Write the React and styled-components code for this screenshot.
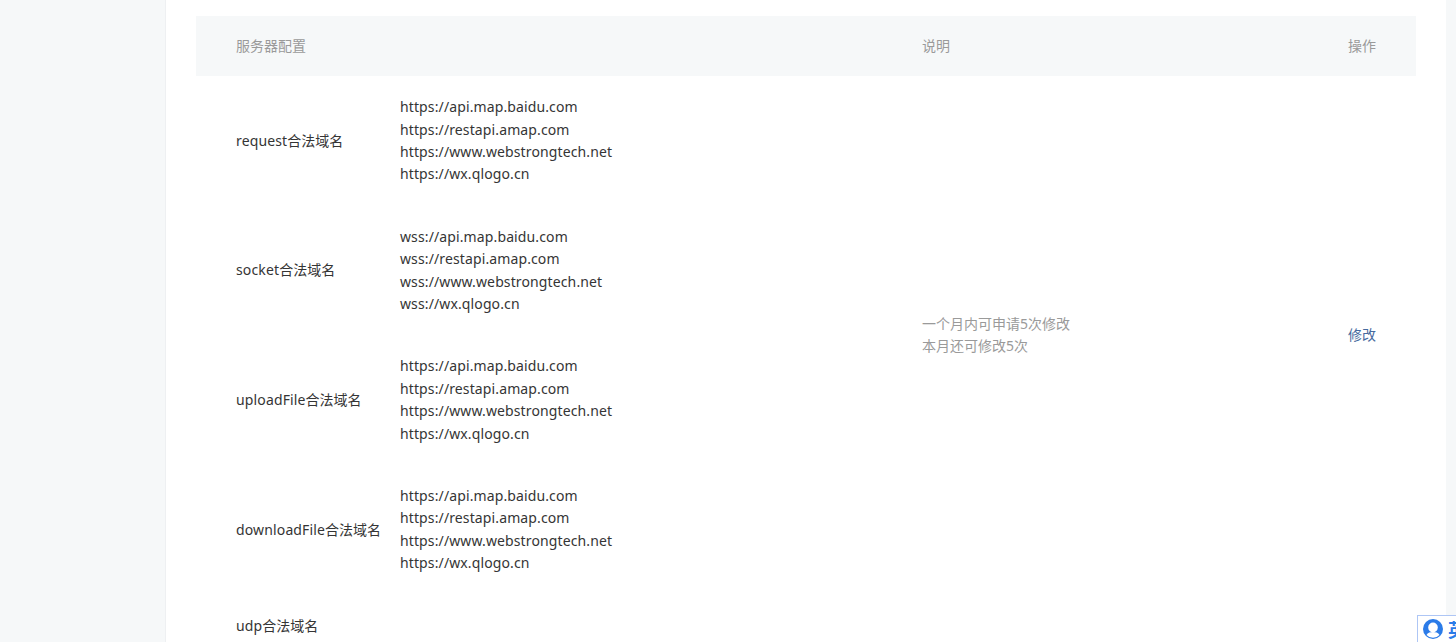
import React from 'react';
import styled, { createGlobalStyle } from 'styled-components';

const GlobalStyle = createGlobalStyle`
  html, body {
    margin: 0;
    height: 100%;
    overflow: hidden;
    background: #f6f8f9;
    font-family: "Noto Sans", "Noto Sans CJK SC", sans-serif;
  }
`;

const Page = styled.div`
  display: flex;
  height: 642px;
  overflow: hidden;
`;

const Sidebar = styled.aside`
  flex: 0 0 165px;
  background: #f6f8f9;
`;

const Main = styled.main`
  flex: 0 0 1281px;
  box-sizing: border-box;
  padding: 16px 30px 0;
  background: #fff;
  border-left: 1px solid #eef0f2;
`;

const Table = styled.div`
  display: grid;
  grid-template-columns: 204px 522px 1fr 109px;
  font-size: 14px;
  line-height: 22.4px;
  color: #353535;
`;

const HeadCell = styled.div`
  display: flex;
  align-items: center;
  justify-content: ${(p) => (p.$right ? 'flex-end' : 'flex-start')};
  height: 60.2px;
  padding: ${(p) => (p.$first ? '0 0 0 40px' : p.$right ? '0 40px 0 0' : '0')};
  background: #f6f8f9;
  color: #9a9a9a;
`;

const Label = styled.div`
  display: flex;
  align-items: center;
  padding: 20px 0 20px 40px;
  white-space: nowrap;
`;

const LabelName = styled.span`
  letter-spacing: 0.14px;
`;

const Domains = styled.div`
  padding: 20px 0;
`;

const Domain = styled.div`
  white-space: nowrap;
  letter-spacing: 0.12px;
`;

const Note = styled.div`
  grid-column: 3;
  grid-row: 2 / span 4;
  align-self: center;
  color: #9a9a9a;
`;

const Action = styled.a`
  grid-column: 4;
  grid-row: 2 / span 4;
  align-self: center;
  justify-self: end;
  padding-right: 40px;
  color: #466a9e;
  text-decoration: none;
`;

const LangBadge = styled.div`
  position: fixed;
  left: 1417px;
  top: 615px;
  display: flex;
  align-items: flex-start;
  gap: 5px;
  box-sizing: border-box;
  width: 60px;
  height: 40px;
  padding: 3px 0 0 5px;
  background: #fff;
  border: 1px solid #aec6f5;
  color: #2b7be8;
  font-size: 18px;
  line-height: 22px;
  font-weight: 700;
`;

const hosts = [
  'api.map.baidu.com',
  'restapi.amap.com',
  'www.webstrongtech.net',
  'wx.qlogo.cn',
];

const rows = [
  { name: 'request', scheme: 'https' },
  { name: 'socket', scheme: 'wss' },
  { name: 'uploadFile', scheme: 'https' },
  { name: 'downloadFile', scheme: 'https' },
];

const App = () => {
  return (
    <Page>
      <GlobalStyle />
      <Sidebar />
      <Main>
        <Table>
          <HeadCell $first>服务器配置</HeadCell>
          <HeadCell />
          <HeadCell>说明</HeadCell>
          <HeadCell $right>操作</HeadCell>
          {rows.map((row) => (
            <React.Fragment key={row.name}>
              <Label><LabelName>{row.name}</LabelName>合法域名</Label>
              <Domains>
                {hosts.map((host) => (
                  <Domain key={host}>{row.scheme}://{host}</Domain>
                ))}
              </Domains>
            </React.Fragment>
          ))}
          <Note>
            <div>一个月内可申请5次修改</div>
            <div>本月还可修改5次</div>
          </Note>
          <Action href="#">修改</Action>
          <Label><LabelName>udp</LabelName>合法域名</Label>
        </Table>
      </Main>
      <LangBadge>
        <svg width="20" height="20" viewBox="0 0 20 20">
          <circle cx="10" cy="10" r="10" fill="#2b7be8" />
          <ellipse cx="10" cy="8.500" rx="4.800" ry="5" fill="#fff" />
          <path d="M3.500 16c1.200-2.400 3.800-3 6.500-3s5.300.6 6.500 3a9 9 0 0 1-13 0z" fill="#fff" />
        </svg>
        <span>英</span>
      </LangBadge>
    </Page>
  );
};

export default App;
